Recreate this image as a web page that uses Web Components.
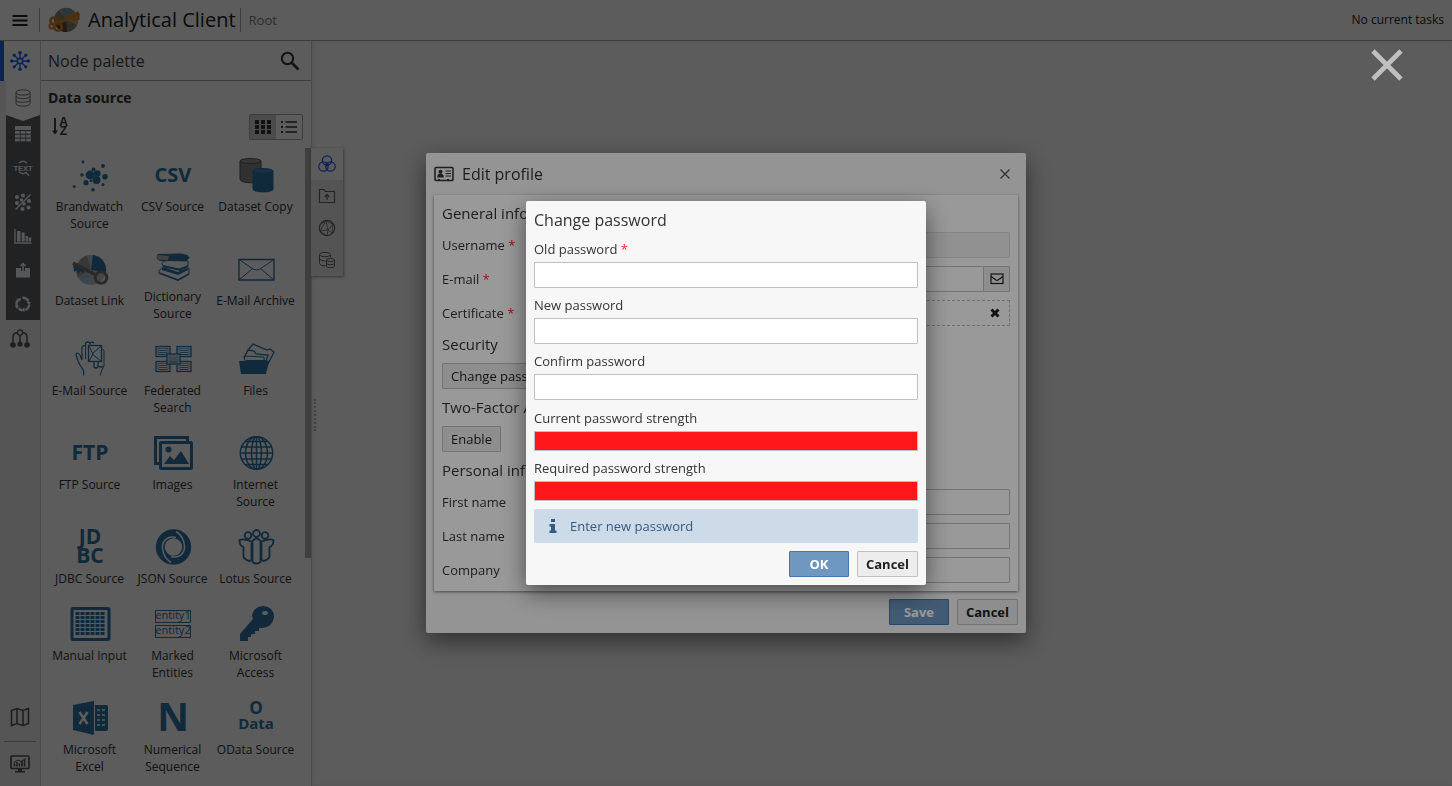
<!DOCTYPE html>
<html lang="en">
<head>
<meta charset="utf-8">
<title>Analytical Client</title>
<style>
  :root {
    --text: #333;
    --muted: #808080;
    --border: #c0c0c0;
    --accent: #2460f2;
    --node: #2f75a6;
    --primary: #6f98c1;
  }
  html, body { height: 100%; }
  body {
    margin: 0;
    overflow: hidden;
    font: 13px/18px "Open Sans", "Noto Sans", sans-serif;
    color: var(--text);
    background: #fff;
  }
</style>
</head>
<body>
<analytical-app></analytical-app>

<modal-layer>
  <profile-dialog></profile-dialog>
</modal-layer>
<modal-layer closable>
  <password-dialog></password-dialog>
</modal-layer>

<script>
const svg = (w, h, body, box = `0 0 ${w} ${h}`) =>
  `<svg width="${w}" height="${h}" viewBox="${box}" fill="none" stroke="currentColor" overflow="visible" aria-hidden="true">${body}</svg>`;

const dots = (list) => list.map(([x, y, r]) => `<circle cx="${x}" cy="${y}" r="${r}"/>`).join('');

const grid = (cols, rows, x, y, w, h, dx, dy) => {
  let out = '';
  for (let r = 0; r < rows; r++)
    for (let c = 0; c < cols; c++)
      out += `<rect x="${x + c * dx}" y="${y + r * dy}" width="${w}" height="${h}"/>`;
  return out;
};

const label = (x, y, size, text, weight = 700) =>
  `<text x="${x}" y="${y}" font-size="${size}" font-weight="${weight}" text-anchor="middle" fill="currentColor" stroke="none">${text}</text>`;

const page = (x, y, w, h) =>
  `<rect x="${x}" y="${y}" width="${w}" height="${h}" fill="#fff" stroke-width="1.300"/><rect x="${x + 2}" y="${y + 2}" width="${w - 4}" height="${h - 4}" stroke-width=".6"/>` +
  `<path d="M${x + 3} ${y + 4}h${w - 6}M${x + 3} ${y + 6}h${w - 6}M${x + 3} ${y + 8}h${w - 6}" stroke-width=".8"/>`;

// Palette icons, all on a 40px wide canvas
const NODE_ICONS = {
  brandwatch: `<g fill="currentColor" stroke="none">${dots([[13, 5, 1.4], [33, 9, 2], [12, 18, 1.8], [20, 18, 4.4], [27.3, 16.6, 3.3], [23.5, 12.5, 2], [35, 19.7, 2.8], [26.5, 23, 4], [16, 25.7, 2.6], [33, 27.6, 1.6], [4.2, 29.4, 1.5], [23, 32.7, 1.8], [21, 23.8, 1.4]])}</g>`,
  csv: label(20, 25, 20, 'CSV'),
  copy: `<path d="M4 4v18c0 5 21 5 21 0V4" fill="#8b8b8b" stroke="#555"/><ellipse cx="14.500" cy="4" rx="10.500" ry="2.500" fill="#999" stroke="#555"/>
    <path d="M16.500 14v18c0 4.500 21 4.500 21 0V14z" fill="currentColor" stroke="none"/><ellipse cx="27" cy="14" rx="10" ry="2.500" fill="#5580b8" stroke="currentColor"/>`,
  link: `<g stroke="none"><circle cx="21" cy="19" r="15" fill="#b4c3cf"/><path d="M21 19 17 4.600A15 15 0 0 0 8 26z" fill="#9b9b9b"/><path d="M21 19 23 4a15 15 0 0 1 13 17z" fill="currentColor"/><path d="M21 19 9 27a15 15 0 0 0 8 6z" fill="#9dbfda"/>
    <path d="M3 13l1 8 3-2 1 4 3-3 2 2 2-3z" fill="currentColor"/></g>
    <path d="M3 12 25 23.500" stroke="#777" stroke-width="3.500"/><circle cx="31" cy="26.500" r="5.800" stroke="#777" stroke-width="3"/>`,
  dictionary: `<path d="M5 3.500 28 3q8 1 8 4l-3 2.500H7q-3-1-3-3z" fill="currentColor"/><path d="M5 4l11 1-1 4H6q-3-2-1-5z" fill="#b8b8b8" stroke="none"/>
    <path d="M35 10 16 9.500q-7 0-7 3 0 3 4 3.500l13 2 9-3z" fill="#fff"/><path d="M10 15l17 4 8-4" stroke-width="2"/>
    <path d="M36 17 24 22 11 17q-6 1-5 5l19 7 11-6z" fill="#fff"/><path d="M9 16l16 5 10-4v2l-10 5-16-5z" fill="currentColor" stroke="none"/><path d="M6 22l19 7 11-6" stroke-width="1.600"/>`,
  archive: `<path d="M3 8.500h35v20.500H3z" stroke-width="1.400"/><path d="M3 8.500 17 18q3.500 2 7 0L38 8.500M3 29l13-11M38 29 25 18"/>`,
  hand: `<path d="M13.500 34.500q1-5-2-8Q8 22 6 13q2-2 4 1l2 5V6q1-2 3.500-1V2q2-2 4.500 0V1.500q2.500-1 4 .5" stroke-width="1.200"/><path d="M15.500 5v13M20 2v17M30 34.500q1-4 4-10V9q-2-1-2.500 0"/>
    <rect x="18.500" y="4.500" width="13" height="16" fill="#fff" stroke-width="1.300"/><path d="M31 5 22 13l9 7M19 5l4 8-4 7"/><path d="M24 21v5q2 2 4 0v-5m0 4q3 2 5 0" stroke-width="1.300"/>`,
  federated: page(3, 5.5, 14, 10) + page(24, 5.5, 14, 10) + page(3, 20.5, 14, 10) + page(24, 20.5, 14, 10) + page(14, 13, 13, 10),
  files: `<path d="M10 13l2-4 5-6 14 6 3-1 4 3-8 16" stroke-width="1.300"/><path d="M8 17l4-8 6 1 2 3 12 1-2 6" fill="#fff" stroke-width="1.300"/><path d="M9 20l-1-5 20 1v4"/><path d="M3 20h6l2-1h18l4 1-3 13H5z" fill="currentColor" stroke="none"/>`,
  ftp: label(20, 25, 21, 'FTP'),
  images: `<path d="M6 28.500H2.500V2.500h32V6" stroke-width="3"/><rect x="7.500" y="7.500" width="31" height="26" rx="1" stroke-width="3"/><g fill="currentColor" stroke="none"><circle cx="15.500" cy="14.500" r="3"/><path d="M11 29l6-8 4 4 7-9 8 13z"/></g>`,
  internet: `<g stroke-width="1.500"><circle cx="20.500" cy="18" r="16.200"/><ellipse cx="20.500" cy="18" rx="11" ry="16.200"/><ellipse cx="20.500" cy="18" rx="5" ry="16.200"/><path d="M20.500 2v32M4.500 18h32M6 12h29M6 24h29M10 6.500h21M10 29.500h21"/></g>`,
  jdbc: label(20, 15, 21, 'JD') + label(20, 34, 21, 'BC'),
  json: `<circle cx="20.500" cy="18" r="13.200" stroke-width="9"/><path d="M23 8.500C15 6 9 12 9.500 19 10 26 14 31 18 33.500M18 27.500C26 30 32 24 31.500 17 31 10 27 5 23 2.500" stroke="#fff" stroke-width="1.500"/>`,
  lotus: `<g stroke-width="1.800"><circle cx="20.500" cy="4.500" r="3.500"/><circle cx="12" cy="6.500" r="3.300"/><circle cx="29" cy="6.500" r="3.300"/><path d="M16.500 13q-8-4-13-2 0 6 4 7v10q3 4 6 4l2-1V14"/><path d="M24.500 13q8-4 13-2 0 6-4 7v10q-3 4-6 4l-2-1V14"/><path d="M16.500 12q4-5 8 0v21q-4 3-8 0z"/></g>`,
  manual: `<rect x="2" y="2.500" width="37" height="31" rx="1" stroke-width="3"/><g fill="currentColor" stroke="none">${grid(6, 6, 5.5, 6, 4, 3, 5, 4)}</g>`,
  entities: `<path d="M2.500 4.500h35v12h-35zM2.500 19.500h35v12h-35z"/>` + label(20, 13, 11, 'entity1', 400) + label(20, 28, 11, 'entity2', 400),
  key: `<g stroke="none"><path d="M16 10q1-9 11-10 11 1 11 11-1 10-12 11l-3 0v3h-4v3h-4v3h-3v4H4v-7l13-15z" fill="currentColor"/><ellipse cx="29" cy="7" rx="3" ry="2" fill="#fff"/></g>`,
  excel: `<g stroke="none"><path d="M3 5 24 1v34L3 30z" fill="currentColor"/><path d="M25 5h11q2 0 2 2v22q0 2-2 2H25z" fill="currentColor"/><path d="M27 10h3m2 0h3M27 15h3m2 0h3M27 20h3m2 0h3M27 25h3m2 0h3" stroke="#fff" stroke-width="1.300"/></g><path d="M9.500 12l8 12m0-12-8 12" stroke="#fff" stroke-width="2.600"/>`,
  numeric: label(20, 31, 39, 'N'),
  odata: label(20, 14, 17, 'O') + label(20, 29, 15, 'Data')
};

const NODES = [
  ['brandwatch', 'Brandwatch Source'], ['csv', 'CSV Source'], ['copy', 'Dataset Copy'],
  ['link', 'Dataset Link'], ['dictionary', 'Dictionary Source', 32], ['archive', 'E-Mail Archive'],
  ['hand', 'E-Mail Source'], ['federated', 'Federated Search'], ['files', 'Files'],
  ['ftp', 'FTP Source'], ['images', 'Images'], ['internet', 'Internet Source'],
  ['jdbc', 'JDBC Source'], ['json', 'JSON Source'], ['lotus', 'Lotus Source'],
  ['manual', 'Manual Input'], ['entities', 'Marked Entities'], ['key', 'Microsoft Access'],
  ['excel', 'Microsoft Excel'], ['numeric', 'Numerical Sequence'], ['odata', 'OData Source']
];

const ICONS = {
  menu: svg(16, 16, '<path d="M.5 4h15M.5 8.500h15M.5 13h15" stroke-width="2"/>'),
  logo: svg(32, 28, `<g stroke="none"><circle cx="18" cy="14" r="12" fill="#8d8268"/><path d="M18 14 11 4q8-5 15 1z" fill="#7896aa"/><path d="M18 14 26 5q5 5 3 14z" fill="#c5a36a"/><path d="M18 14 8 20q4 6 11 6z" fill="#5c4a37"/></g>
    <g stroke="#d98420"><path d="M31 7 10 17" stroke-width="4"/><path d="M30 8v6M26 10v5" stroke-width="3"/><circle cx="6" cy="15" r="3.500" stroke-width="2.600"/><circle cx="10" cy="21" r="3.800" stroke-width="2.600"/><circle cx="4" cy="20" r="2.500" stroke-width="2"/></g>`),
  hub: svg(20, 20, `<path d="M10 2v5M10 13v5M2 10h5M13 10h5M4.300 4.300 8 8M12 12l3.700 3.700M15.700 4.300 12 8M8 12l-3.700 3.700" stroke-width="1.400"/><circle cx="10" cy="10" r="2.600" stroke-width="1.600"/><g fill="currentColor" stroke="none">${dots([[10, 1.800, 1.800], [10, 18.200, 1.800], [1.800, 10, 1.800], [18.200, 10, 1.800], [4.200, 4.200, 1.600], [15.800, 15.800, 1.600], [15.800, 4.200, 1.600], [4.200, 15.800, 1.600]])}</g>`),
  database: svg(16, 18, '<ellipse cx="8" cy="3.500" rx="7" ry="2.700"/><path d="M1 3.500v11c0 3.500 14 3.500 14 0v-11M1 7c0 3.500 14 3.500 14 0M1 10.700c0 3.500 14 3.500 14 0"/>'),
  table: svg(16, 16, `<g fill="currentColor" stroke="none"><rect width="16" height="4"/>${grid(3, 3, 0, 5, 4.7, 2.8, 5.6, 3.8)}</g>`),
  text: svg(18, 16, `<path d="M5 3q4-3.500 8 0M5 12q4 3 7 .5l3 3" stroke-width="1.300"/>${label(9, 10.5, 7.5, 'TEXT')}`),
  scatter: svg(18, 18, `<path d="M1.500 16.500 16.500 1.500" stroke-width="1.400"/><g fill="currentColor" stroke="none">${dots([[3, 4, 2], [9, 2.500, 2], [3, 10, 2], [7.500, 7, 1.700], [10, 11, 1.700], [15, 8, 2], [14.500, 14.500, 2], [8.500, 16, 2]])}</g>`),
  bars: svg(18, 16, '<path d="M1 1v14h16.500" stroke-width="1.300"/><path d="M3 3h3.500v10.500H3zM7.700 4.500h3v9h-3zM11.500 8h2.500v5.500h-2.500zM14.700 9.500h2.500v4h-2.500z" fill="currentColor" stroke="none"/>'),
  output: svg(16, 16, '<path d="M1 6h5v3h4V6h5v9.500H1z" fill="currentColor" stroke="none"/><path d="M8 9V2M5.500 4 8 1.500 10.500 4" stroke-width="1.500"/>'),
  cycle: svg(16, 16, '<g stroke-width="2.400"><path d="M2 10.500a6.200 6.200 0 0 1 2-7.300M7.500 1.700a6.300 6.300 0 0 1 6 3.800M14.200 8.500a6.300 6.300 0 0 1-4 5.500M7.500 14.200a6.200 6.200 0 0 1-4-2"/></g><path d="M2 3l4-1-1 4zM11.500 6H16l-2 3zM9.500 11.500v4.500l-3.500-2zM0 10h4l-2 3z" fill="currentColor" stroke="none"/>'),
  tree: svg(20, 20, `<circle cx="10" cy="3.500" r="2.600" stroke-width="1.400"/><path d="M7.500 3.500Q3 4 3 8v6M12.500 3.500Q17 4 17 8v6M10 6v8" stroke-width="1.500"/><g fill="currentColor" stroke="none">${dots([[3, 16, 2.800], [10, 15, 2.600], [17, 16, 2.800]])}</g>`),
  map: svg(20, 20, '<path d="M1.500 3.500 7 1.500l6 2 5.500-2v15L13 18.500l-6-2-5.500 2zM7 1.500v15M13 3.500v15" stroke-width="1.600"/>'),
  monitor: svg(20, 20, '<rect x="1" y="2" width="18" height="12.500" rx="1" stroke-width="1.700"/><path d="M8 15h4v2h3v1.500H5V17h3z" fill="currentColor" stroke="none"/><path d="M4.500 12.500v-3M7 12.500V8m2.500 4.500v-3m2.500 3V7m2.500 5.500V6" stroke-width="1.600"/><path d="M3.500 9 8 6l3 1.500 5-3" />'),
  search: svg(20, 20, '<circle cx="7.500" cy="7.500" r="5.700" stroke-width="2"/><path d="M12 12l6.500 6.500" stroke-width="2.600"/>'),
  sort: svg(18, 20, `<path d="M4 1v14" stroke-width="1.800"/><path d="M1 13.500h6L4 17.500z" fill="currentColor" stroke="none"/>${label(12.5, 9, 12, 'A')}${label(12.5, 18, 12, 'Z')}`),
  tiles: svg(18, 16, `<g fill="currentColor" stroke="none">${grid(3, 3, 1, 1, 4, 4, 6, 5)}</g>`),
  list: svg(18, 16, '<path d="M5.500 3H17M5.500 8H17M5.500 13H17" stroke-width="1.600"/><path d="M1 3h2M1 8h2M1 13h2" stroke-width="2"/>'),
  circles: svg(18, 18, '<g stroke-width="1.200"><circle cx="9" cy="5.500" r="4.700"/><circle cx="5.500" cy="11.500" r="4.700"/><circle cx="12.500" cy="11.500" r="4.700"/></g><path d="M7 8.500h4L9 12.500z" fill="currentColor" stroke="none"/>'),
  upload: svg(18, 16, '<path d="M1.500 14.500v-13H6l1.500 2h9v11z" stroke-width="1.200"/><path d="M9 12V7M6.500 9 9 6.500 11.500 9" stroke-width="1.300"/>'),
  network: svg(18, 18, '<circle cx="9" cy="9" r="7.700" stroke-width="1.200"/><path d="M2 12 8 2l2 9-8 1 7 5 1-6 4 3M10 11l5-6M8 2l7 3-1 9M3 5l5-3" stroke-width=".8"/>'),
  stores: svg(18, 18, '<ellipse cx="7" cy="3.500" rx="5.500" ry="2.200"/><path d="M1.500 3.500v9q1 2.500 6 2.300M12.500 3.500v3M1.500 8q2 2.300 6 2"/><ellipse cx="12.500" cy="9" rx="4" ry="1.600"/><path d="M8.500 9v6c0 2.300 8 2.300 8 0V9M8.500 12c0 2.300 8 2.300 8 0"/>'),
  card: svg(20, 16, '<rect x="1" y="1.500" width="18" height="13" rx="1" stroke-width="1.600"/><circle cx="6.500" cy="5.700" r="2" fill="currentColor" stroke="none"/><path d="M3.200 11.500q0-4 3.300-4t3.300 4z" fill="currentColor" stroke="none"/><path d="M11.500 5H17M11.500 7.500H17M11.500 10H17M4 13.500h2M13 13.500h2" stroke-width="1.200"/>'),
  close: svg(12, 12, '<path d="M1.500 1.500l9 9m0-9-9 9" stroke-width="1.400"/>'),
  bigClose: svg(32, 32, '<path d="M2 2l28 28M30 2 2 30" stroke-width="4.600"/>'),
  mail: svg(14, 12, '<rect x="1" y="1" width="12" height="9.500" stroke-width="1.200"/><path d="M1 3.500 6 7q1 .6 2 0l5-3.500" stroke-width="1.200"/>'),
  remove: svg(10, 10, '<path d="M1.500 1.500l7 7m0-7-7 7" stroke-width="3"/>'),
  info: svg(8, 14, '<path d="M2 0h4v3H2zM.5 5H6v6.500h1.500V14h-7v-2.500H2v-4H.5z" fill="currentColor" stroke="none"/>')
};

const buttonStyles = `
  button {
    box-sizing: border-box;
    height: 26px;
    padding: 0 8px;
    border: 1px solid var(--border);
    border-radius: 1px;
    background: #ededed;
    color: #222;
    font: inherit;
    cursor: pointer;
  }
  .actions { display: flex; justify-content: flex-end; gap: 8px; }
  .actions button { min-width: 60px; font-weight: 700; }
  .actions .primary { background: var(--primary); border-color: #4478ab; color: #fff; }
`;

const inputStyles = `
  input {
    box-sizing: border-box;
    width: 100%;
    min-width: 0;
    height: 26px;
    padding: 0 8px;
    border: 1px solid var(--border);
    border-radius: 1px;
    background: #fff;
    font: inherit;
  }
`;

class BaseElement extends HTMLElement {
  constructor() {
    super();
    this.attachShadow({ mode: 'open' });
  }

  connectedCallback() {
    this.shadowRoot.innerHTML = this.render();
  }
}

class AnalyticalApp extends BaseElement {
  render() {
    return `
      <style>
        :host { display: flex; flex-direction: column; height: 100vh; }
        .body { display: flex; flex: 1; min-height: 0; }
        main { flex: 1; display: flex; align-items: flex-start; position: relative; box-shadow: inset 1px 0 #ccc, inset 3px 0 4px rgba(0, 0, 0, .08); }
        .grip { position: absolute; left: 3px; top: 358px; height: 32px; border-left: 2px dotted #bbb; }
        side-tabs { margin-top: 107px; }
      </style>
      <app-header></app-header>
      <div class="body">
        <side-rail></side-rail>
        <node-palette></node-palette>
        <main><side-tabs></side-tabs><div class="grip"></div></main>
      </div>
    `;
  }
}

class AppHeader extends BaseElement {
  render() {
    return `
      <style>
        :host { display: block; border-bottom: 1px solid #a8a8a8; }
        header { display: flex; align-items: center; height: 40px; padding-right: 8px; }
        button { display: grid; place-items: center; width: 39px; height: 40px; padding: 0; border: 0; background: none; color: #222; }
        .line { width: 1px; height: 24px; background: #aaa; }
        svg { display: block; }
        .logo { padding: 0 8px; }
        h1 { margin: 0 4px 0 0; font-size: 20px; line-height: 28px; font-weight: 400; color: #222; }
        a { margin-left: 8px; color: var(--muted); text-decoration: none; }
        .tasks { margin-left: auto; font-size: 12px; color: #222; }
      </style>
      <header>
        <button aria-label="Menu">${ICONS.menu}</button>
        <span class="line"></span>
        <span class="logo">${ICONS.logo}</span>
        <h1>Analytical Client</h1>
        <span class="line"></span>
        <a href="#root">Root</a>
        <span class="tasks">No current tasks</span>
      </header>
    `;
  }
}

class SideRail extends BaseElement {
  render() {
    const dark = ['table', 'text', 'scatter', 'bars', 'output', 'cycle'];
    return `
      <style>
        :host { display: flex; flex-direction: column; width: 40px; background: #ededed; border-right: 1px solid #ccc; }
        button { display: grid; place-items: center; width: 100%; height: 34px; padding: 0; border: 0; background: none; color: #555; }
        .main { height: 40px; border-left: 4px solid var(--accent); padding-right: 4px; background: #fff; color: var(--accent); }
        .group { margin-left: 6px; background: #5d6267; }
        .group button { color: #f4f4f4; }
        .group .current {
          height: 41px;
          padding-bottom: 7px;
          background: #fff;
          color: #777;
          clip-path: polygon(0 0, 100% 0, 100% 34px, 50% 40px, 0 34px);
        }
        .group .current + button { margin-top: -6px; }
        .group button:not(.current) { padding-top: 2px; }
        .single { height: 38px; }
        .bottom { margin-top: auto; }
        .bottom button { height: 48px; }
        .bottom button:last-child { border-top: 1px solid #aaa; width: 32px; height: 45px; margin: 0 4px; }
      </style>
      <button class="main" aria-label="Nodes">${ICONS.hub}</button>
      <div class="group">
        <button class="current" aria-label="Data source">${ICONS.database}</button>
        ${dark.map((name) => `<button aria-label="${name}">${ICONS[name]}</button>`).join('')}
      </div>
      <button class="single" aria-label="Tree">${ICONS.tree}</button>
      <div class="bottom">
        <button aria-label="Map">${ICONS.map}</button>
        <button aria-label="Monitor">${ICONS.monitor}</button>
      </div>
    `;
  }
}

class NodePalette extends BaseElement {
  render() {
    return `
      <style>
        :host { display: flex; flex-direction: column; width: 270px; background: #fff; min-height: 0; }
        button { display: grid; place-items: center; padding: 0; border: 0; background: none; color: #333; }
        header { display: flex; align-items: center; justify-content: space-between; box-sizing: border-box; height: 40px; padding: 0 11px 0 7px; border-bottom: 1px solid #aaa; }
        h2 { margin: 0; font-size: 16px; line-height: 22px; font-weight: 400; color: #444; }
        h3 { margin: 7px 7px 6px; font-size: 14px; line-height: 20px; font-weight: 700; }
        .tools { display: flex; align-items: center; justify-content: space-between; height: 26px; padding: 0 8px 0 10px; }
        .view { display: flex; border: 1px solid #aaa; border-radius: 2px; }
        .view button { width: 26px; height: 24px; }
        .view .on { background: #d0d0d0; }
        .scroll { display: flex; flex: 1; min-height: 0; margin-top: 8px; overflow: hidden; }
        .nodes { display: grid; grid-template-columns: repeat(3, 1fr); align-content: start; row-gap: 19px; flex: 1; padding: 9px 8px 0 7px; }
        .bar { width: 6px; height: 410px; background: #b0b0b4; }
      </style>
      <header>
        <h2>Node palette</h2>
        <button aria-label="Search">${ICONS.search}</button>
      </header>
      <h3>Data source</h3>
      <div class="tools">
        <button aria-label="Sort">${ICONS.sort}</button>
        <div class="view">
          <button class="on" aria-label="Tiles">${ICONS.tiles}</button>
          <button aria-label="List">${ICONS.list}</button>
        </div>
      </div>
      <div class="scroll">
        <div class="nodes">
          ${NODES.map(([icon, name, height = 36]) => `<palette-node icon="${icon}" height="${height}">${name}</palette-node>`).join('')}
        </div>
        <div class="bar"></div>
      </div>
    `;
  }
}

class PaletteNode extends BaseElement {
  render() {
    const height = this.getAttribute('height');
    return `
      <style>
        :host { display: block; font-size: 12px; line-height: 17px; text-align: center; cursor: grab; }
        svg { display: block; margin: 0 auto 5px; color: var(--node); }
      </style>
      ${svg(40, height, NODE_ICONS[this.getAttribute('icon')])}
      <slot></slot>
    `;
  }
}

class SideTabs extends BaseElement {
  render() {
    return `
      <style>
        :host { display: block; width: 32px; background: #ececec; box-shadow: 1px 1px 3px rgba(0, 0, 0, .4); }
        button { display: grid; place-items: center; width: 32px; height: 32px; padding: 0; border: 0; background: none; color: #666; }
        .on { background: #fff; color: var(--accent); }
      </style>
      <button class="on" aria-label="Overview">${ICONS.circles}</button>
      <button aria-label="Upload">${ICONS.upload}</button>
      <button aria-label="Network">${ICONS.network}</button>
      <button aria-label="Stores">${ICONS.stores}</button>
    `;
  }
}

class ModalLayer extends BaseElement {
  render() {
    return `
      <style>
        :host { position: fixed; inset: 0; display: grid; place-items: center; background: rgba(0, 0, 0, .4); }
        .close { position: absolute; top: 49px; right: 49px; padding: 0; border: 0; background: none; color: #c0c0c0; }
        svg { display: block; }
      </style>
      <slot></slot>
      ${this.hasAttribute('closable') ? `<button class="close" aria-label="Close">${ICONS.bigClose}</button>` : ''}
    `;
  }
}

class ProfileDialog extends BaseElement {
  render() {
    return `
      <style>
        ${buttonStyles}
        ${inputStyles}
        :host { display: block; box-sizing: border-box; width: 600px; max-width: 100%; padding: 0 8px 8px; border-radius: 2px; background: #f7f7f7; box-shadow: 0 8px 24px rgba(0, 0, 0, .5); }
        header { display: flex; align-items: center; gap: 8px; height: 42px; padding-right: 7px; }
        h2 { flex: 1; margin: 0; font-size: 16px; line-height: 22px; font-weight: 400; }
        header button { display: grid; place-items: center; height: 16px; padding: 0; border: 0; background: none; color: #555; }
        .panel { display: flex; flex-direction: column; align-items: flex-start; gap: 8px; padding: 8px; margin-bottom: 8px; background: #fff; box-shadow: 0 1px 3px rgba(0, 0, 0, .5); }
        h3 { margin: 0; font-size: 15px; line-height: 21px; font-weight: 400; }
        .row { display: grid; grid-template-columns: 160px 1fr; align-items: center; width: 100%; }
        .required::after { content: " *"; color: #f22; }
        .group { display: flex; }
        .group button { display: grid; place-items: center; width: 27px; padding: 0; margin-left: -1px; flex: none; }
        input:disabled { background: #f2f2f2; border-color: #ddd; }
        .file { display: flex; align-items: center; justify-content: flex-end; box-sizing: border-box; height: 26px; padding-right: 9px; border: 1px dashed #bbb; }
        .file button { display: grid; place-items: center; height: 20px; padding: 0; border: 0; background: none; }
      </style>
      <header>
        ${ICONS.card}
        <h2>Edit profile</h2>
        <button aria-label="Close">${ICONS.close}</button>
      </header>
      <div class="panel">
        <h3>General information</h3>
        <div class="row"><label class="required" for="username">Username</label><input id="username" disabled></div>
        <div class="row">
          <label class="required" for="email">E-mail</label>
          <div class="group"><input id="email" type="email"><button aria-label="Send mail">${ICONS.mail}</button></div>
        </div>
        <div class="row">
          <span class="required">Certificate</span>
          <div class="file"><button aria-label="Remove certificate">${ICONS.remove}</button></div>
        </div>
        <h3>Security</h3>
        <button>Change password</button>
        <h3>Two-Factor Authentication</h3>
        <button>Enable</button>
        <h3>Personal information</h3>
        <div class="row"><label for="first">First name</label><input id="first"></div>
        <div class="row"><label for="last">Last name</label><input id="last"></div>
        <div class="row"><label for="company">Company</label><input id="company"></div>
      </div>
      <div class="actions">
        <button class="primary">Save</button>
        <button>Cancel</button>
      </div>
    `;
  }
}

class PasswordDialog extends BaseElement {
  render() {
    return `
      <style>
        ${buttonStyles}
        ${inputStyles}
        :host { display: flex; flex-direction: column; gap: 8px; box-sizing: border-box; width: 400px; max-width: 100%; padding: 8px; border-radius: 2px; background: #f7f7f7; box-shadow: 0 8px 24px rgba(0, 0, 0, .5); }
        h2 { margin: 0; font-size: 16px; line-height: 23px; font-weight: 400; }
        .field { display: flex; flex-direction: column; gap: 4px; }
        .required::after { content: " *"; color: #ff2a35; }
        .strength { display: flex; flex-direction: column; gap: 8px; padding-top: 1px; }
        .meter { box-sizing: border-box; height: 20px; border: 1px solid var(--border); background: #ff171c; }
        .info { display: flex; align-items: center; gap: 13px; height: 34px; padding: 0 15px; border-radius: 2px; background: #cddae7; color: #355b80; }
      </style>
      <h2>Change password</h2>
      <div class="field"><label class="required" for="old">Old password</label><input id="old" type="password"></div>
      <div class="field"><label for="new">New password</label><input id="new" type="password"></div>
      <div class="field"><label for="confirm">Confirm password</label><input id="confirm" type="password"></div>
      <div class="strength">
        <div class="field"><span id="current">Current password strength</span><div class="meter" role="meter" aria-valuenow="0" aria-labelledby="current"></div></div>
        <div class="field"><span id="needed">Required password strength</span><div class="meter" role="meter" aria-valuenow="0" aria-labelledby="needed"></div></div>
      </div>
      <div class="info">${ICONS.info}<span>Enter new password</span></div>
      <div class="actions">
        <button class="primary">OK</button>
        <button>Cancel</button>
      </div>
    `;
  }
}

customElements.define('app-header', AppHeader);
customElements.define('side-rail', SideRail);
customElements.define('palette-node', PaletteNode);
customElements.define('node-palette', NodePalette);
customElements.define('side-tabs', SideTabs);
customElements.define('analytical-app', AnalyticalApp);
customElements.define('profile-dialog', ProfileDialog);
customElements.define('password-dialog', PasswordDialog);
customElements.define('modal-layer', ModalLayer);
</script>
</body>
</html>
